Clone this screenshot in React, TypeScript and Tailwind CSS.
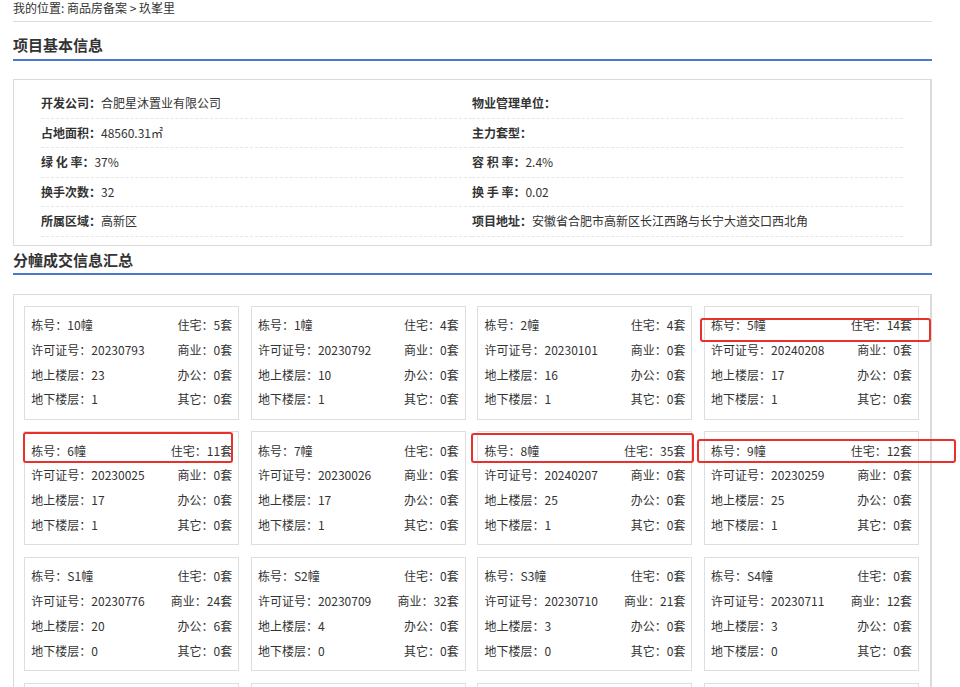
import React from "react";

type Card = {
  no: string;
  zz: string;
  xk: string;
  sy: string;
  ds: string;
  bg: string;
  dx: string;
  qt: string;
};

const cards: Card[] = [
  { no: "10幢", zz: "5", xk: "20230793", sy: "0", ds: "23", bg: "0", dx: "1", qt: "0" },
  { no: "1幢", zz: "4", xk: "20230792", sy: "0", ds: "10", bg: "0", dx: "1", qt: "0" },
  { no: "2幢", zz: "4", xk: "20230101", sy: "0", ds: "16", bg: "0", dx: "1", qt: "0" },
  { no: "5幢", zz: "14", xk: "20240208", sy: "0", ds: "17", bg: "0", dx: "1", qt: "0" },
  { no: "6幢", zz: "11", xk: "20230025", sy: "0", ds: "17", bg: "0", dx: "1", qt: "0" },
  { no: "7幢", zz: "0", xk: "20230026", sy: "0", ds: "17", bg: "0", dx: "1", qt: "0" },
  { no: "8幢", zz: "35", xk: "20240207", sy: "0", ds: "25", bg: "0", dx: "1", qt: "0" },
  { no: "9幢", zz: "12", xk: "20230259", sy: "0", ds: "25", bg: "0", dx: "1", qt: "0" },
  { no: "S1幢", zz: "0", xk: "20230776", sy: "24", ds: "20", bg: "6", dx: "0", qt: "0" },
  { no: "S2幢", zz: "0", xk: "20230709", sy: "32", ds: "4", bg: "0", dx: "0", qt: "0" },
  { no: "S3幢", zz: "0", xk: "20230710", sy: "21", ds: "3", bg: "0", dx: "0", qt: "0" },
  { no: "S4幢", zz: "0", xk: "20230711", sy: "12", ds: "3", bg: "0", dx: "0", qt: "0" },
];

const leftInfo: [string, string][] = [
  ["开发公司：", "合肥星沐置业有限公司"],
  ["占地面积：", "48560.31㎡"],
  ["绿 化 率：", "37%"],
  ["换手次数：", "32"],
  ["所属区域：", "高新区"],
];
const rightInfo: [string, string][] = [
  ["物业管理单位：", ""],
  ["主力套型：", ""],
  ["容 积 率：", "2.4%"],
  ["换 手 率：", "0.02"],
  ["项目地址：", "安徽省合肥市高新区长江西路与长宁大道交口西北角"],
];

function InfoRow({ label, value }: { label: string; value: string }) {
  return (
    <div className="h-[29.5px] flex items-center border-b border-dashed border-[#e6e6e6]">
      <span className="font-bold">{label}</span>
      <span>{value}</span>
    </div>
  );
}

function Row({ l, lv, r, rv }: { l: string; lv: string; r: string; rv: string }) {
  return (
    <div className="flex justify-between leading-[24.7px] whitespace-nowrap">
      <span>
        {l}：{lv}
      </span>
      <span>
        {r}：{rv}套
      </span>
    </div>
  );
}

function BuildingCard({ c }: { c: Card }) {
  return (
    <div className="h-[114px] border border-[#dedede] px-[6px] py-[6.6px] bg-white">
      <Row l="栋号" lv={c.no} r="住宅" rv={c.zz} />
      <Row l="许可证号" lv={c.xk} r="商业" rv={c.sy} />
      <Row l="地上楼层" lv={c.ds} r="办公" rv={c.bg} />
      <Row l="地下楼层" lv={c.dx} r="其它" rv={c.qt} />
    </div>
  );
}

export default function App() {
  return (
    <div
      className="relative bg-white text-[12px] text-[#333] h-[687px] overflow-hidden"
      style={{ fontFamily: '"Noto Sans CJK SC", "Noto Sans", sans-serif' }}
    >
      <div className="ml-[13px] w-[919px]">
        <div className="h-[22px] leading-[16px] border-b border-[#dcdcdc]">
          我的位置: 商品房备案 &gt; 玖峯里
        </div>
        <div className="pt-[14px] pb-[5px] leading-[18px] text-[15px] font-bold text-[#333] border-b-2 border-[#4a78cc]">
          项目基本信息
        </div>
        <div className="mt-[18px] border border-[#dadada] border-r-2 pt-[9px] pb-[8px] pl-[27px] pr-[27px]">
          <div className="grid grid-cols-2">
            <div>
              {leftInfo.map(([l, v]) => (
                <InfoRow key={l} label={l} value={v} />
              ))}
            </div>
            <div>
              {rightInfo.map(([l, v]) => (
                <InfoRow key={l} label={l} value={v} />
              ))}
            </div>
          </div>
        </div>
        <div className="pt-[5px] pb-[4px] leading-[18px] text-[15px] font-bold text-[#333] border-b-2 border-[#4a78cc]">
          分幢成交信息汇总
        </div>
        <div className="mt-[19px] border border-[#dadada] border-r-2 pt-[11px] pl-[10.3px] pr-[11px] pb-[12px]">
          <div className="grid grid-cols-4 gap-x-[11.7px] gap-y-[11.7px]">
            {cards.map((c) => (
              <BuildingCard key={c.no} c={c} />
            ))}
            <div className="h-[114px] border border-[#dedede] bg-white" />
            <div className="h-[114px] border border-[#dedede] bg-white" />
            <div className="h-[114px] border border-[#dedede] bg-white" />
            <div className="h-[114px] border border-[#dedede] bg-white" />
          </div>
        </div>
      </div>

      {/* red annotation boxes */}
      <div className="absolute left-[700px] top-[318px] w-[231px] h-[24px] border-2 border-[#e8302c] rounded-[3px]" />
      <div className="absolute left-[23px] top-[432px] w-[210px] h-[31px] border-2 border-[#e8302c] rounded-[3px]" />
      <div className="absolute left-[471px] top-[433px] w-[223px] h-[30px] border-2 border-[#e8302c] rounded-[3px]" />
      <div className="absolute left-[697px] top-[439px] w-[259px] h-[24px] border-2 border-[#e8302c] rounded-[3px]" />
    </div>
  );
}
